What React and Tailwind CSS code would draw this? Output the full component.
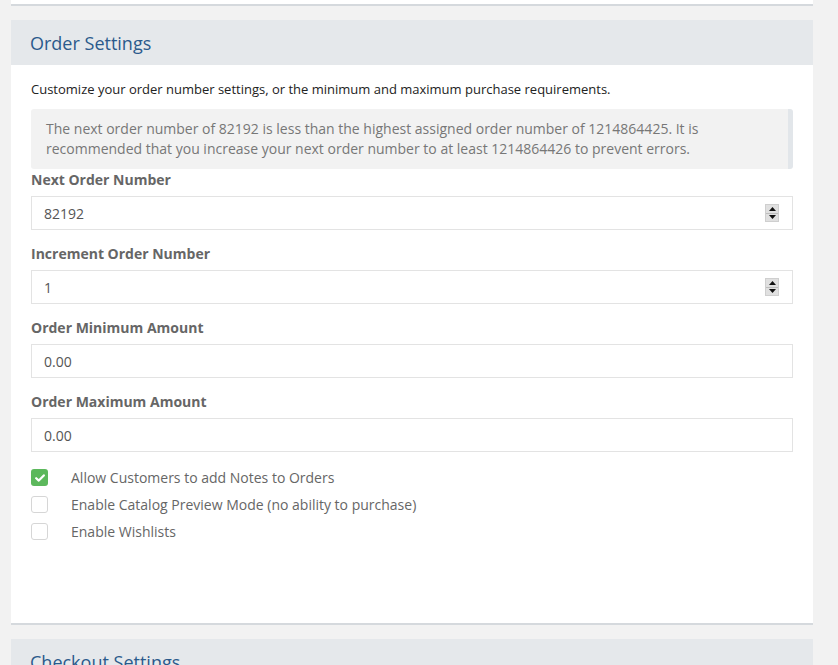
import React from 'react';

const font = { fontFamily: '"Open Sans", "Liberation Sans", sans-serif' };

const Spinner = () => (
  <div className="flex flex-col w-[14px] h-[18px] bg-[#e0e0e0] border border-[#cfcfcf]">
    <div className="flex-1 flex items-center justify-center border-b border-[#bdbdbd]">
      <svg width="7" height="4" viewBox="0 0 7 4"><path d="M0 4 L3.5 0 L7 4 Z" fill="#111" /></svg>
    </div>
    <div className="flex-1 flex items-center justify-center">
      <svg width="7" height="4" viewBox="0 0 7 4"><path d="M0 0 L3.5 4 L7 0 Z" fill="#111" /></svg>
    </div>
  </div>
);

const Field = ({ label, value, spinner }) => (
  <div className="flex flex-col">
    <label className="text-[14px] font-bold text-[#666] leading-[20px] mb-[6px]">{label}</label>
    <div className="h-[34px] border border-[#e3e3e3] bg-white flex items-center justify-between pl-[12px] pr-[13px]">
      <span className="text-[14px] text-[#555]">{value}</span>
      {spinner && <Spinner />}
    </div>
  </div>
);

const Check = ({ checked, label }) => (
  <div className="flex items-center h-[17px]">
    {checked ? (
      <div className="w-[17px] h-[17px] rounded-[3px] bg-[#5cb85c] flex items-center justify-center">
        <svg width="10" height="8" viewBox="0 0 10 8">
          <path d="M1.2 4.2 L3.8 6.6 L8.8 1.4" stroke="#fff" strokeWidth="2.2" fill="none" strokeLinecap="round" strokeLinejoin="round" />
        </svg>
      </div>
    ) : (
      <div className="w-[17px] h-[17px] rounded-[3px] bg-white border border-[#d6d6d6]" />
    )}
    <span className="ml-[23px] text-[14px] text-[#666]">{label}</span>
  </div>
);

export default function App() {
  return (
    <div className="w-[838px] h-[665px] bg-[#f2f2f2] overflow-hidden" style={font}>
      <div className="flex flex-col w-[802px] ml-[11px]">
        {/* previous panel end */}
        <div className="h-[6px] bg-white border-b-2 border-[#d5d9dd]" />

        {/* Order Settings panel */}
        <div className="mt-[14px] flex flex-col">
          <div className="h-[45px] bg-[#e5e8eb] flex items-center px-[19px]">
            <h2 className="text-[18px] text-[#2b5a8c] leading-none">Order Settings</h2>
          </div>
          <div className="bg-white h-[560px] px-[20px] pt-[15px] border-b-2 border-[#d5d9dd]">
            <p className="text-[13px] text-[#222] leading-[18px]">
              Customize your order number settings, or the minimum and maximum purchase requirements.
            </p>
            <div className="mt-[11px] h-[60px] bg-[#f2f2f2] rounded-[3px] border-r-[5px] border-[#e2e6ea] px-[15px] flex items-center">
              <p className="text-[14px] text-[#777] leading-[20px]">
                The next order number of 82192 is less than the highest assigned order number of 1214864425. It is recommended that you increase your next order number to at least 1214864426 to prevent errors.
              </p>
            </div>
            <div className="flex flex-col gap-[14px] mt-[1px]">
              <Field label="Next Order Number" value="82192" spinner />
              <Field label="Increment Order Number" value="1" spinner />
              <Field label="Order Minimum Amount" value="0.00" />
              <Field label="Order Maximum Amount" value="0.00" />
            </div>
            <div className="flex flex-col gap-[10px] mt-[17px]">
              <Check checked label="Allow Customers to add Notes to Orders" />
              <Check label="Enable Catalog Preview Mode (no ability to purchase)" />
              <Check label="Enable Wishlists" />
            </div>
          </div>
        </div>

        {/* Checkout Settings panel */}
        <div className="mt-[14px] h-[45px] bg-[#e5e8eb] flex items-center px-[19px]">
          <h2 className="text-[18px] text-[#2b5a8c] leading-none">Checkout Settings</h2>
        </div>
      </div>
    </div>
  );
}
